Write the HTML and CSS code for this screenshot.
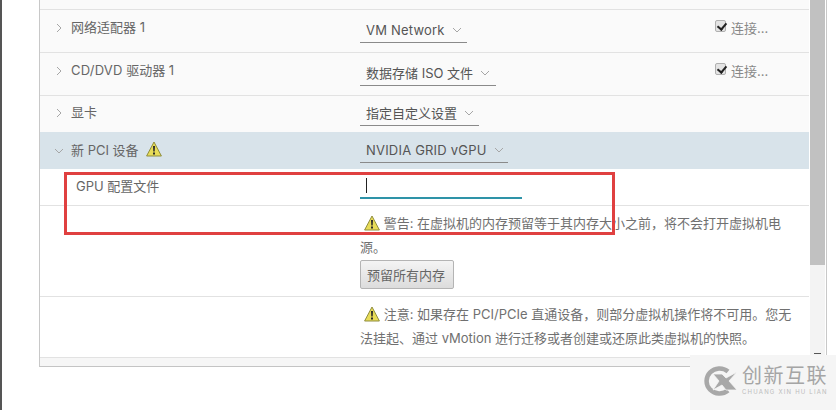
FILE: index.html
```html
<!DOCTYPE html>
<html>
<head>
  <title>编辑设置</title>
  <link rel="stylesheet" href="styles.css">
</head>
<body>
  <div class="page-edge"></div>
  <div class="panel">
    <div class="rows">
      <div class="row row-top"></div>

      <div class="row row-device">
        <div class="row-label">
          <svg class="chevron" viewBox="0 0 8 10"><path d="M2 1l4 4-4 4"/></svg>
          <span>网络适配器 1</span>
        </div>
        <div class="select w-network"><span class="latin">VM Network</span><svg class="caret" viewBox="0 0 10 6"><path d="M1 1l4 4 4-4"/></svg></div>
        <label class="connect"><input type="checkbox" checked> 连接...</label>
      </div>

      <div class="row row-device">
        <div class="row-label">
          <svg class="chevron" viewBox="0 0 8 10"><path d="M2 1l4 4-4 4"/></svg>
          <span><span class="latin">CD/DVD</span> 驱动器 1</span>
        </div>
        <div class="select w-iso"><span>数据存储 ISO 文件</span><svg class="caret" viewBox="0 0 10 6"><path d="M1 1l4 4 4-4"/></svg></div>
        <label class="connect"><input type="checkbox" checked> 连接...</label>
      </div>

      <div class="row row-device row-short">
        <div class="row-label">
          <svg class="chevron" viewBox="0 0 8 10"><path d="M2 1l4 4-4 4"/></svg>
          <span>显卡</span>
        </div>
        <div class="select w-video"><span>指定自定义设置</span><svg class="caret" viewBox="0 0 10 6"><path d="M1 1l4 4 4-4"/></svg></div>
      </div>

      <div class="row row-device row-open">
        <div class="row-label">
          <svg class="chevron" viewBox="0 0 10 8"><path d="M1 2l4 4 4-4"/></svg>
          <span>新 PCI 设备</span>
          <svg class="warn warn-title" viewBox="0 0 16 16"><path class="warn-fill" d="M8 1L15.4 15H.6z"/><path class="warn-mark" d="M7 5h2l-.3 5.5H7.3zM7 11.5h2v2H7z"/></svg>
        </div>
        <div class="select w-gpu"><span class="latin">NVIDIA GRID vGPU</span><svg class="caret" viewBox="0 0 10 6"><path d="M1 1l4 4 4-4"/></svg></div>
      </div>

      <div class="row row-gpu">
        <div class="gpu-label">GPU 配置文件</div>
        <div class="gpu-input"><i class="text-cursor"></i></div>
      </div>

      <div class="row row-message row-warning">
        <div class="message">
          <svg class="warn" viewBox="0 0 16 16"><path class="warn-fill" d="M8 1L15.4 15H.6z"/><path class="warn-mark" d="M7 5h2l-.3 5.5H7.3zM7 11.5h2v2H7z"/></svg>
          警告: 在虚拟机的内存预留等于其内存大小之前，将不会打开虚拟机电源。
        </div>
        <button class="reserve-btn">预留所有内存</button>
      </div>

      <div class="row row-message row-note">
        <div class="message">
          <svg class="warn" viewBox="0 0 16 16"><path class="warn-fill" d="M8 1L15.4 15H.6z"/><path class="warn-mark" d="M7 5h2l-.3 5.5H7.3zM7 11.5h2v2H7z"/></svg>
          注意: 如果存在 PCI/PCIe 直通设备，则部分虚拟机操作将不可用。您无法挂起、通过 vMotion 进行迁移或者创建或还原此类虚拟机的快照。
        </div>
      </div>

      <div class="panel-footer"></div>
    </div>
    <div class="scrollbar">
      <div class="scroll-thumb"></div>
      <div class="scroll-track"><span class="scroll-arrow"></span></div>
    </div>
  </div>

  <div class="highlight"></div>

  <div class="watermark">
    <svg class="wm-logo" viewBox="0 0 36 30">
      <path class="wm-ring" d="M26 5.5A13 12.5 0 1 0 26 24.5"/>
      <path class="wm-x" d="M11 8h9l4 4 11-6-8 9 8 9H24l-4-5-9 5 6-9z"/>
    </svg>
    <div>
      <div class="wm-title">创新互联</div>
      <div class="wm-sub">CHUANG XIN HU LIAN</div>
    </div>
  </div>
</body>
</html>
```

FILE: styles.css
```css
* {
  box-sizing: border-box;
}

body {
  margin: 0;
  height: 410px;
  overflow: hidden;
  background: #fff;
  display: flex;
  align-items: flex-start;
  font-family: Inter, "Noto Sans CJK SC", sans-serif;
  font-size: 13px;
  color: #666;
}

.page-edge {
  width: 2px;
  height: 410px;
  background: #555;
  flex: none;
}

.latin {
  letter-spacing: .2px;
}

.panel {
  margin-left: 37px;
  width: 788px;
  height: 367px;
  display: flex;
  border-left: 1px solid #c8c8c8;
  border-right: 1px solid #c8c8c8;
  border-bottom: 1px solid #c4c4c4;
}

.rows {
  width: 769px;
  flex: none;
}

.row {
  position: relative;
  border-bottom: 1px solid #e2e2e2;
}

.row-top {
  height: 10px;
  background: #fafafa;
}

.row-device {
  height: 43px;
  display: flex;
  background: #fafafa;
}

.row-short {
  height: 36px;
  border-bottom: 0;
}

.row-open {
  height: 37px;
  background: #d8e3ea;
  border-bottom: 0;
}

.row-label {
  width: 320px;
  padding: 7px 0 0 15px;
  display: flex;
  align-items: flex-start;
  line-height: 20px;
  flex: none;
}

.row-short .row-label {
  padding-top: 6px;
}

.row-open .row-label {
  padding-top: 8px;
}

.chevron {
  width: 8px;
  height: 10px;
  margin: 6px 8px 0 0;
  fill: none;
  stroke: #a6a6a6;
  stroke-width: 1;
}

.row-open .chevron {
  width: 10px;
  height: 8px;
  margin: 7px 7px 0 -1px;
}

.select {
  height: 33px;
  padding: 10px 0 0 6px;
  line-height: 20px;
  border-bottom: 1px solid #8a8a8a;
  white-space: nowrap;
  color: #555;
}

.row-short .select {
  height: 30px;
  padding-top: 7px;
}

.row-open .select {
  height: 31px;
  padding-top: 8px;
}

.w-network { width: 107px; }
.w-iso { width: 136px; }
.w-video { width: 119px; }
.w-gpu { width: 148px; }

.caret {
  width: 10px;
  height: 6px;
  margin-left: 7px;
  vertical-align: 2px;
  fill: none;
  stroke: #a6a6a6;
  stroke-width: 1;
}

.connect {
  position: absolute;
  left: 675px;
  top: 8px;
  display: flex;
  align-items: flex-start;
  gap: 5px;
  line-height: 20px;
  color: #888;
}

.connect input {
  appearance: none;
  position: relative;
  width: 11px;
  height: 12px;
  margin: 2px 0 0;
  border: 1px solid #b0b0b0;
  border-radius: 2px;
  background: #e4e4e4;
}

.connect input::after {
  content: "";
  position: absolute;
  left: 2.5px;
  top: 0;
  width: 4px;
  height: 7px;
  border: solid #222;
  border-width: 0 2px 2px 0;
  transform: rotate(40deg);
}

.warn {
  width: 16px;
  height: 16px;
  margin: 0 0 0 4px;
  vertical-align: -3px;
}

.warn-title {
  margin: 1px 0 0 7px;
  flex: none;
}

.warn-fill {
  fill: #e8dc58;
  stroke: #8f8d3c;
  stroke-width: 1;
  stroke-linejoin: round;
}

.warn-mark {
  fill: #2b2b2b;
}

.row-gpu {
  height: 37px;
  display: flex;
  background: #fff;
}

.gpu-label {
  width: 320px;
  padding: 7px 0 0 36px;
  line-height: 20px;
  flex: none;
}

.gpu-input {
  width: 162px;
  height: 30px;
  padding: 9px 0 0 6px;
  border-bottom: 2px solid #2e93a8;
}

.text-cursor {
  display: block;
  width: 1px;
  height: 15px;
  background: #222;
}

.row-message {
  padding-left: 320px;
  background: #fff;
}

.row-warning {
  height: 91px;
  padding-top: 5px;
}

.row-note {
  height: 61px;
  padding-top: 5px;
}

.message {
  width: 436px;
  line-height: 24px;
  color: #707070;
}

.reserve-btn {
  display: block;
  width: 94px;
  height: 29px;
  margin-top: 1px;
  padding: 0 2px 0 0;
  border: 1px solid #b4b4b4;
  border-radius: 2px;
  background: linear-gradient(#f4f4f4, #dcdcdc);
  font-family: inherit;
  font-size: 13px;
  color: #666;
}

.panel-footer {
  height: 8px;
  background: #f6f6f6;
}

.scrollbar {
  width: 15px;
  margin-left: 1px;
  flex: none;
  display: flex;
  flex-direction: column;
}

.scroll-thumb {
  height: 265px;
  background: #c1c1c1;
}

.scroll-track {
  flex: 1;
  background: #f3f3f3;
  position: relative;
}

.scroll-arrow {
  position: absolute;
  left: 4px;
  bottom: 12px;
  width: 7px;
  height: 1px;
  background: #555;
}

.highlight {
  position: absolute;
  left: 64px;
  top: 172px;
  width: 551px;
  height: 63px;
  border: 3px solid #e04040;
  pointer-events: none;
}

.watermark {
  position: absolute;
  left: 690px;
  top: 355px;
  width: 146px;
  height: 55px;
  background: #f5f5f5;
  display: flex;
  align-items: center;
  gap: 4px;
  padding: 0 0 3px 12px;
}

.wm-logo {
  width: 36px;
  height: 30px;
  flex: none;
  fill: none;
}

.wm-ring {
  stroke: #a8a8a8;
  stroke-width: 4.5;
}

.wm-x {
  fill: #a8a8a8;
  stroke: #f5f5f5;
  stroke-width: .8;
}

.wm-title {
  font-size: 20px;
  line-height: 21px;
  letter-spacing: 1.5px;
  color: #a5a5a5;
}

.wm-sub {
  font-size: 6px;
  line-height: 9px;
  letter-spacing: 1.2px;
  white-space: nowrap;
  color: #bcbcbc;
}
```
